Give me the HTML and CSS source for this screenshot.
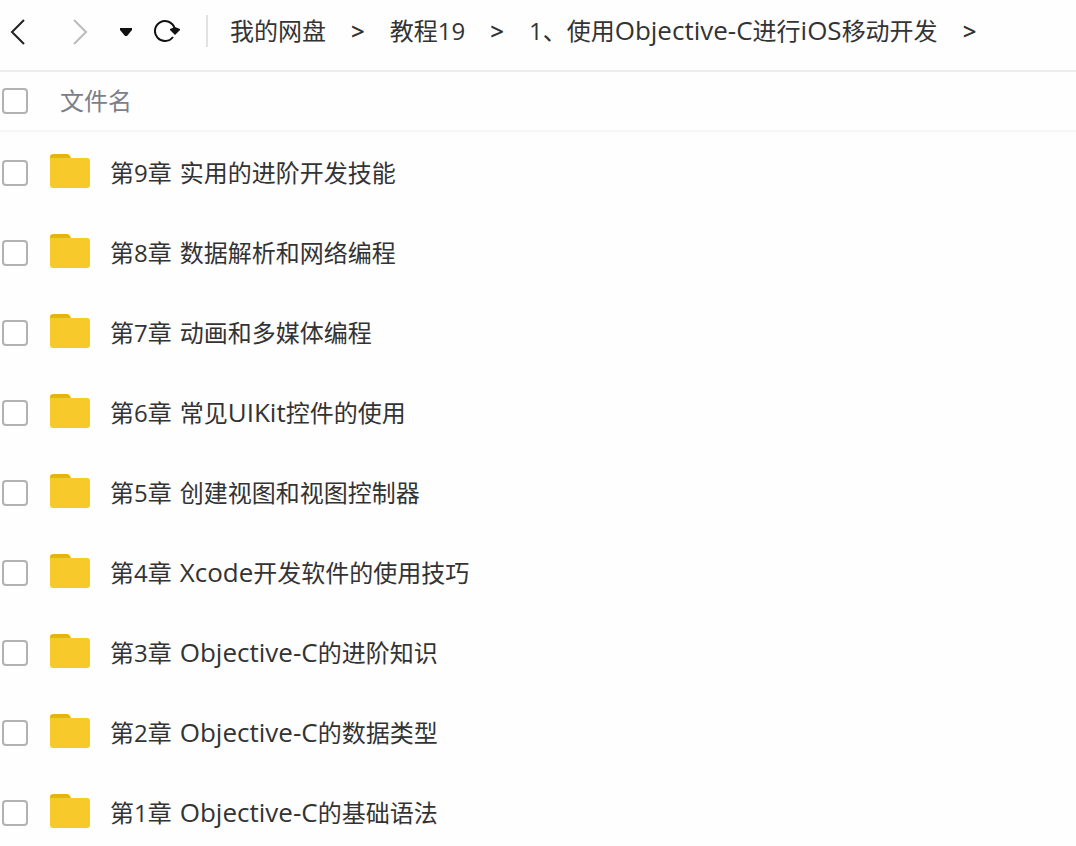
FILE: index.html
```html
<!DOCTYPE html>
<html lang="zh-CN">

<head>
    <meta charset="UTF-8">
    <meta name="viewport" content="width=device-width, initial-scale=1.0">
    <title>我的网盘</title>
    <link rel="stylesheet" href="styles.css">
</head>

<body>
    <!-- shared folder icon -->
    <svg class="sprite" aria-hidden="true">
        <symbol id="folder" viewBox="0 0 40 34">
            <path d="M0 8V3Q0 0 3 0H17Q19 0 20 2L22 6V8Z" fill="#e6b40f" />
            <path d="M0 4H37Q40 4 40 7V31Q40 34 37 34H3Q0 34 0 31Z" fill="#f7c92b" />
        </symbol>
    </svg>

    <header class="toolbar">
        <div class="nav-buttons">
            <button class="nav-btn" aria-label="后退">
                <svg width="36" height="28" viewBox="0 0 36 28">
                    <path d="M24 3L12 15L24 27" fill="none" stroke="#222" stroke-width="2" />
                </svg>
            </button>
            <button class="nav-btn" aria-label="前进" disabled>
                <svg width="36" height="28" viewBox="0 0 36 28">
                    <path d="M16 3L28 15L16 27" fill="none" stroke="#bbb" stroke-width="2" />
                </svg>
            </button>
            <button class="nav-btn" aria-label="历史记录">
                <svg width="16" height="28" viewBox="0 0 16 28">
                    <path d="M4 11H16V13L11 19H9L4 13Z" fill="#111" />
                </svg>
            </button>
            <button class="nav-btn" aria-label="刷新">
                <svg width="26" height="28" viewBox="0 0 26 28">
                    <path d="M19 20A10 10 0 1 1 20.5 11" fill="none" stroke="#111" stroke-width="2" />
                    <path d="M16 12L21 10L26 12V13L21 18L16 13Z" fill="#111" />
                </svg>
            </button>
        </div>
        <nav class="breadcrumb">
            <a href="#">我的网盘</a>
            <span class="sep">&gt;</span>
            <a href="#">教程19</a>
            <span class="sep">&gt;</span>
            <a href="#">1、使用<span class="en">Objective-C</span>进行<span class="en">iOS</span>移动开发</a>
            <span class="sep">&gt;</span>
        </nav>
    </header>

    <main class="file-list">
        <table>
            <thead>
                <tr>
                    <th class="check"><input type="checkbox" aria-label="全选"></th>
                    <th class="title">文件名</th>
                </tr>
            </thead>
            <tbody>
                <tr>
                    <td class="check"><input type="checkbox" id="f9"></td>
                    <td><label class="file" for="f9"><svg class="folder"><use href="#folder" /></svg><span class="chapter">第9章</span> <span>实用的进阶开发技能</span></label></td>
                </tr>
                <tr>
                    <td class="check"><input type="checkbox" id="f8"></td>
                    <td><label class="file" for="f8"><svg class="folder"><use href="#folder" /></svg><span class="chapter">第8章</span> <span>数据解析和网络编程</span></label></td>
                </tr>
                <tr>
                    <td class="check"><input type="checkbox" id="f7"></td>
                    <td><label class="file" for="f7"><svg class="folder"><use href="#folder" /></svg><span class="chapter">第7章</span> <span>动画和多媒体编程</span></label></td>
                </tr>
                <tr>
                    <td class="check"><input type="checkbox" id="f6"></td>
                    <td><label class="file" for="f6"><svg class="folder"><use href="#folder" /></svg><span class="chapter">第6章</span> <span>常见<span class="en">UIKit</span>控件的使用</span></label></td>
                </tr>
                <tr>
                    <td class="check"><input type="checkbox" id="f5"></td>
                    <td><label class="file" for="f5"><svg class="folder"><use href="#folder" /></svg><span class="chapter">第5章</span> <span>创建视图和视图控制器</span></label></td>
                </tr>
                <tr>
                    <td class="check"><input type="checkbox" id="f4"></td>
                    <td><label class="file" for="f4"><svg class="folder"><use href="#folder" /></svg><span class="chapter">第4章</span> <span><span class="en">Xcode</span>开发软件的使用技巧</span></label></td>
                </tr>
                <tr>
                    <td class="check"><input type="checkbox" id="f3"></td>
                    <td><label class="file" for="f3"><svg class="folder"><use href="#folder" /></svg><span class="chapter">第3章</span> <span><span class="en">Objective-C</span>的进阶知识</span></label></td>
                </tr>
                <tr>
                    <td class="check"><input type="checkbox" id="f2"></td>
                    <td><label class="file" for="f2"><svg class="folder"><use href="#folder" /></svg><span class="chapter">第2章</span> <span><span class="en">Objective-C</span>的数据类型</span></label></td>
                </tr>
                <tr>
                    <td class="check"><input type="checkbox" id="f1"></td>
                    <td><label class="file" for="f1"><svg class="folder"><use href="#folder" /></svg><span class="chapter">第1章</span> <span><span class="en">Objective-C</span>的基础语法</span></label></td>
                </tr>
            </tbody>
        </table>
    </main>
</body>

</html>
```
FILE: styles.css
```css
* {
    box-sizing: border-box;
}

body {
    margin: 0;
    height: 100vh;
    display: flex;
    flex-direction: column;
    overflow: hidden;
    background-color: #fefefe;
    color: #333;
    font: 24px/32px "Open Sans", "Noto Sans CJK SC", sans-serif;
}

.sprite {
    display: none;
}

/* latin words run slightly larger than the chinese text */
.en {
    font-size: 26px;
    line-height: 24px;
}

.toolbar {
    flex: none;
    display: flex;
    align-items: center;
    padding: 15px 0 23px;
    border-bottom: 2px solid #ededed;
}

.nav-buttons {
    display: flex;
    align-items: center;
    gap: 22px;
    height: 32px;
    padding-right: 26px;
    border-right: 2px solid #e2e2e2;
}

.nav-btn {
    display: flex;
    padding: 0;
    border: none;
    background: none;
    cursor: pointer;
}

.breadcrumb {
    display: flex;
    gap: 25px;
    padding-left: 22px;
    white-space: nowrap;
}

.breadcrumb a {
    color: #333;
    text-decoration: none;
}

.sep {
    font-weight: 600;
}

.file-list {
    flex: 1;
    min-height: 0;
    overflow: hidden;
}

table {
    width: 100%;
    border-collapse: separate;
    border-spacing: 0;
}

th,
td {
    padding: 0;
    text-align: left;
    vertical-align: middle;
}

th {
    height: 60px;
    border-bottom: 2px solid #f6f6f6;
    color: #7c7f88;
    font-weight: normal;
}

td {
    height: 80px;
    padding-top: 2px;
}

.check {
    width: 50px;
    padding-left: 2px;
}

.title {
    padding-left: 10px;
}

input[type="checkbox"] {
    appearance: none;
    display: block;
    width: 26px;
    height: 26px;
    margin: 0;
    border: 2px solid #b2b2b2;
    border-radius: 4px;
    background-color: #fff;
}

input[type="checkbox"]:checked {
    background-color: #06a7ff;
}

.file {
    display: flex;
    align-items: center;
}

.folder {
    width: 40px;
    height: 34px;
    margin: 0 20px 4px 0;
}

.chapter {
    margin-right: 8px;
}
```
